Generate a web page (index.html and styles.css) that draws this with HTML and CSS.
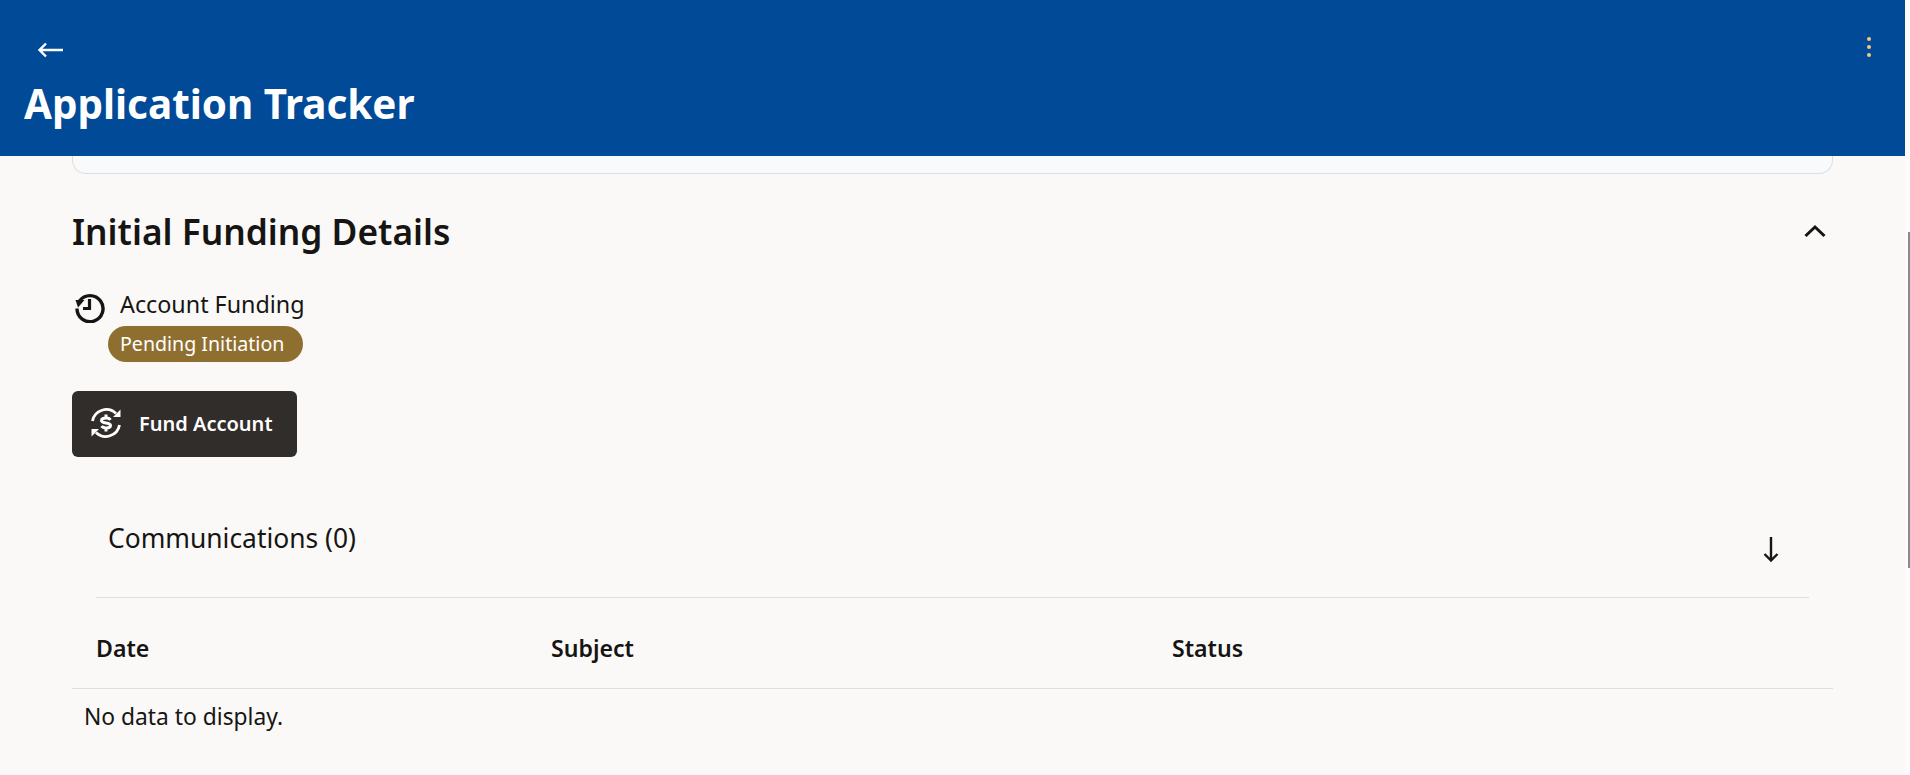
FILE: index.html
```html
<!DOCTYPE html>
<html lang="en">
<head>
<meta charset="utf-8">
<title>Application Tracker</title>
<link rel="stylesheet" href="styles.css">
</head>
<body>
<div class="shell">
  <div class="page">
    <header class="header">
      <div class="header-top">
        <button class="icon-btn" aria-label="Back">
          <svg width="26" height="16" viewBox="0 0 26 16"><path d="M9 1.500 2.500 8 9 14.500M2.500 8H26" fill="none" stroke="#fff" stroke-width="2.400"/></svg>
        </button>
        <span class="kebab"><i></i><i></i><i></i></span>
      </div>
      <h1 class="app-title">Application Tracker</h1>
    </header>
    <main class="main">
      <div class="card-end"></div>
      <section class="section">
        <div class="section-head">
          <h2 class="section-title">Initial Funding Details</h2>
          <svg class="chevron" width="22" height="14" viewBox="0 0 22 14"><path d="M1.500 12 11 3l9.500 9" fill="none" stroke="#161513" stroke-width="3"/></svg>
        </div>
        <div class="status-row">
          <svg class="history" width="30" height="30" viewBox="0 0 30 30"><path d="M4.500 8A13 13 0 1 1 2 15.500" fill="none" stroke="#161513" stroke-width="3.400"/><path d="M0.500 7h9L3 14.500z" fill="#161513"/><path d="M14.500 6v9.500H8" fill="none" stroke="#161513" stroke-width="3.200"/></svg>
          <div class="status-text">
            <div class="status-name">Account Funding</div>
            <span class="badge">Pending Initiation</span>
          </div>
        </div>
        <button class="fund-btn">
          <svg width="32" height="32" viewBox="0 0 32 32"><path d="M2.500 14A14 14 0 0 1 26 6.500M29.500 18A14 14 0 0 1 6 25.500" fill="none" stroke="#fff" stroke-width="2.800"/><path d="M30.500 2.500V10h-7.500zM1.500 29.500V22H9z" fill="#fff"/><path d="M20.500 12.800c-.9-1.300-2.600-1.800-4.500-1.800-2.700 0-4.500.9-4.500 2.500s1.800 2.100 4.500 2.500 4.500.9 4.500 2.500-1.800 2.500-4.500 2.500c-1.900 0-3.600-.5-4.500-1.800M16 7.500V11M16 21v3.500" fill="none" stroke="#fff" stroke-width="3"/></svg>
          <span>Fund Account</span>
        </button>
        <div class="comms">
          <div class="comms-head">
            <span class="comms-title">Communications (0)</span>
            <svg class="arrow-down" width="16" height="25" viewBox="0 0 16 25"><path d="M8 0v23M1.500 17 8 23.500 14.500 17" fill="none" stroke="#161513" stroke-width="2.400"/></svg>
          </div>
        </div>
        <div class="table">
          <div class="thead">
            <span class="col-date">Date</span>
            <span class="col-subject">Subject</span>
            <span class="col-status">Status</span>
          </div>
          <div class="empty">No data to display.</div>
        </div>
      </section>
    </main>
  </div>
  <div class="scrollbar"><div class="thumb"></div></div>
</div>
</body>
</html>
```
FILE: styles.css
```css
* { box-sizing: border-box; }
html, body { margin: 0; height: 100%; overflow: hidden; }
body { font-family: "Noto Sans", "Open Sans", sans-serif; color: #161513; background: #fbf9f8; }
.shell { display: flex; height: 775px; }
.page { flex: 1; min-width: 0; display: flex; flex-direction: column; }
.header { height: 156px; background: #004a98; padding: 32px 34px 0 24px; color: #fff; flex: none; }
.header-top { display: flex; justify-content: space-between; align-items: center; height: 30px; }
.icon-btn { padding: 0; margin: 6px 0 0 13px; border: 0; background: none; display: flex; }
.kebab { display: flex; flex-direction: column; gap: 4px; }
.kebab i { display: block; width: 4px; height: 4px; border-radius: 50%; background: #f6c77d; }
.app-title { margin: 15px 0 0; font-size: 40.400px; line-height: 54px; font-weight: 700; }
.main { flex: 1; padding: 0 72px; }
.card-end { height: 18px; background: #f9fafb; border: 1px solid #dfdedd; border-top: 0; border-radius: 0 0 14px 14px; }
.section-head { display: flex; justify-content: space-between; align-items: center; margin-top: 33px; height: 48px; }
.section-title { margin: 0; font-size: 35.300px; line-height: 48px; font-weight: 600; }
.chevron { margin-right: 7px; }
.status-row { display: flex; margin-top: 33px; }
.history { margin: 5px 3px 0 3px; flex: none; }
.status-name { font-size: 23.300px; line-height: 32px; margin-left: 12px; }
.badge { display: block; width: 195px; height: 36px; line-height: 35px; margin-top: 6px; padding-left: 12px; border-radius: 18px; background: #8f6f2f; color: #fff; font-size: 19.600px; white-space: nowrap; }
.fund-btn { display: flex; align-items: center; gap: 17px; width: 225px; height: 66px; margin-top: 29px; padding: 0 0 2px 18px; border: 0; border-radius: 6px; background: #312d2a; color: #fff; font: 600 20px "Noto Sans", sans-serif; }
.comms { margin: 25px 24px 0 24px; border-bottom: 1px solid #dfdedd; height: 116px; }
.comms-head { display: flex; justify-content: space-between; padding: 38px 30px 0 12px; }
.comms-title { font-size: 26.400px; line-height: 36px; }
.arrow-down { margin-top: 17px; }
.thead { display: flex; height: 91px; padding-top: 10px; align-items: center; border-bottom: 1px solid #dfdedd; font-size: 23.100px; font-weight: 600; }
.col-date { width: 479px; padding-left: 24px; }
.col-subject { width: 621px; }
.empty { font-size: 22.800px; line-height: 30px; padding: 13px 12px 11px; }
.scrollbar { width: 5px; flex: none; background: #fdfcfb; padding-top: 232px; }
.thumb { width: 2px; height: 336px; margin-left: 3px; background: #8b8b8b; }
```
